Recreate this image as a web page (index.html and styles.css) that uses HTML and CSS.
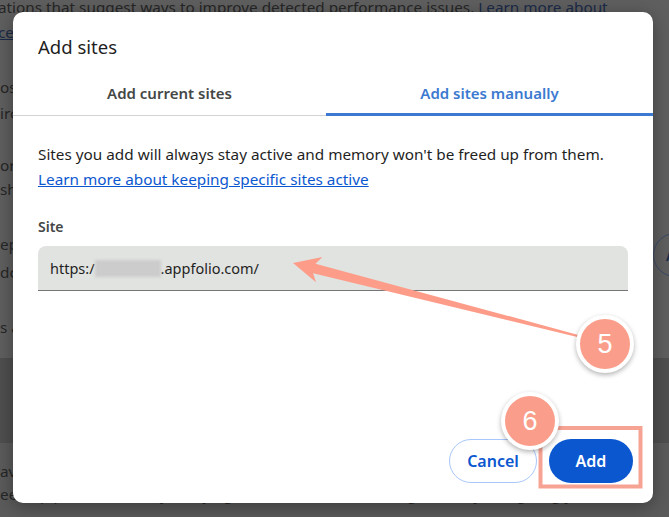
FILE: index.html
```html
<html>
<head>
  <link rel="stylesheet" href="styles.css">
</head>
<body>
  <div class="page">
    <section class="card top">
      <p class="para p1">ations that suggest ways to improve detected performance issues. <a class="plink">Learn more about</a><br><a class="plink">ce</a> issues and fixes</p>
      <p class="para p2">osts about tabs that have been open for a long while<br>irc the settings below to make Chrome faster</p>
      <p class="para p3">or tabs to free up memory for the sites you use most<br>sh inactive tabs are shown again when you return</p>
      <div class="row p4">
        <p class="para">ep these sites active even when memory is low<br>dc not free memory for the sites listed here</p>
        <span class="ghost">Add</span>
      </div>
      <p class="para p5">s active sites are listed below</p>
    </section>
    <div class="band"></div>
    <section class="card bottom">
      <p class="para p6">av Energy Saver limits background activity to save battery<br>eed up performance by delaying visual effects and freeing memory and giving you</p>
      <p class="para p7">more battery life while you keep working on the apps you use</p>
    </section>
  </div>

  <div class="dialog">
    <div class="dlg-title">Add sites</div>
    <div class="tabs">
      <div class="tab first">Add current sites</div>
      <div class="tab on">Add sites manually</div>
    </div>
    <div class="dlg-body">
      <p class="info">Sites you add will always stay active and memory won't be freed up from them.<br><a class="link">Learn more about keeping specific sites active</a></p>
      <div class="label">Site</div>
      <div class="field">https:/<span class="smudge"></span>.appfolio.com/</div>
    </div>
    <div class="dlg-foot">
      <button class="btn cancel">Cancel</button>
      <button class="btn add">Add</button>
    </div>
  </div>

  <svg class="marks" width="669" height="517" viewBox="0 0 669 517">
    <polygon fill="#fd9d89" points="293,263 322.4,257.1 315.5,263.7 583.8,336.4 583.4,338.4 313.1,273.3 316,282.3"/>
    <rect x="540.5" y="428" width="100" height="58.5" fill="none" stroke="#f7a394" stroke-width="4"/>
  </svg>
  <div class="badge b5">5</div>
  <div class="badge b6">6</div>
</body>
</html>
```

FILE: styles.css
```css
body {
  margin: 0;
  width: 669px;
  height: 517px;
  overflow: hidden;
  position: relative;
  background: #5d5d5d;
  font-family: "Noto Sans", "Open Sans", sans-serif;
}

/* page behind the scrim */
.page {
  color: #262626;
  font-size: 15.3px;
}
.card.top {
  height: 358px;
  background: #5f5f5f;
  overflow: hidden;
}
.band {
  height: 85px;
  background: #4f4f4f;
}
.card.bottom {
  height: 74px;
  background: #5b5b5b;
  overflow: hidden;
}
.para {
  margin: 0;
  line-height: 25px;
  white-space: nowrap;
}
.plink {
  color: #1b2a48;
  text-decoration: underline;
}
.p1 { margin: -5px 0 0 -2px; }
.p2 { margin-top: 29px; line-height: 26px; }
.p3 { margin-top: 27px; line-height: 24px; }
.p4 {
  margin-top: 29px;
  display: flex;
  align-items: center;
  justify-content: space-between;
}
.p4 .para { line-height: 28px; }
.ghost {
  box-sizing: border-box;
  width: 72px;
  height: 44px;
  margin: -6px -56px 0 0;
  padding-left: 12px;
  border: 1px solid #3a4a66;
  border-radius: 22px;
  display: flex;
  align-items: center;
  color: #1a2b4c;
  font-weight: 600;
}
.p5 { margin-top: 29px; }
.p6 { margin-top: 17px; line-height: 23px; }
.p7 { margin-top: 11px; line-height: 23px; }

/* dialog */
.dialog {
  position: absolute;
  left: 13px;
  top: 12px;
  width: 640px;
  height: 491px;
  background: #fff;
  border-radius: 10px;
  box-shadow: 0 4px 18px rgba(0, 0, 0, 0.35);
  display: flex;
  flex-direction: column;
  overflow: hidden;
}
.dlg-title {
  padding: 23px 25px 0;
  font-size: 18.5px;
  line-height: 24px;
  color: #1f1f1f;
}
.tabs {
  display: flex;
  margin-top: 11px;
}
.tab {
  box-sizing: border-box;
  height: 46px;
  display: flex;
  align-items: center;
  justify-content: center;
  font-size: 15px;
  font-weight: 600;
  color: #444746;
  border-bottom: 1px solid #d3d3d3;
}
.tab.first { width: 313px; }
.tab.on {
  flex: 1;
  color: #3b7ad0;
  border-bottom: 3px solid #3b7ad0;
  padding-top: 2px;
}
.dlg-body {
  padding: 0 25px;
}
.info {
  margin: 26px 0 0;
  font-size: 15.3px;
  line-height: 25px;
  color: #1f1f1f;
}
.link {
  color: #0b57d0;
  text-decoration: underline;
}
.label {
  margin-top: 25px;
  font-size: 14px;
  line-height: 20px;
  font-weight: 600;
  color: #444746;
}
.field {
  box-sizing: border-box;
  margin-top: 9px;
  height: 45px;
  padding-left: 12px;
  display: flex;
  align-items: center;
  background: #e1e3e1;
  border-radius: 8px 8px 0 0;
  border-bottom: 1px solid #747775;
  font-size: 14.5px;
  color: #1f1f1f;
}
.smudge {
  display: inline-block;
  width: 66px;
  height: 17px;
  background: #cbcccb;
  filter: blur(1.5px);
}
.dlg-foot {
  margin-top: auto;
  display: flex;
  justify-content: flex-end;
  gap: 12px;
  padding: 0 20px 20px;
}
.btn {
  box-sizing: border-box;
  height: 44px;
  border-radius: 22px;
  font-family: inherit;
  font-size: 16px;
  font-weight: 600;
}
.cancel {
  width: 88px;
  background: #fff;
  color: #0b57d0;
  border: 1px solid #a8c7fa;
}
.add {
  width: 84px;
  background: #0b57d0;
  color: #fff;
  border: none;
}

/* annotations */
.marks {
  position: absolute;
  left: 0;
  top: 0;
}
.badge {
  position: absolute;
  box-sizing: border-box;
  width: 58px;
  height: 58px;
  border: 4px solid #fff;
  border-radius: 50%;
  background: #fa9e8b;
  box-shadow: 0 2px 5px rgba(0, 0, 0, 0.3);
  color: #fff;
  font-family: "Liberation Sans", Arial, sans-serif;
  font-size: 27px;
  display: flex;
  align-items: center;
  justify-content: center;
}
.b5 { left: 576px; top: 315px; }
.b6 { left: 501px; top: 392px; }
```
